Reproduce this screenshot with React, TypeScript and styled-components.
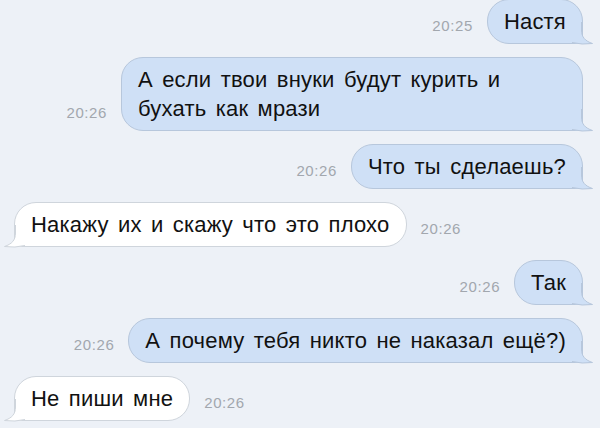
import React from "react";
import styled, { createGlobalStyle } from "styled-components";

const GlobalStyle = createGlobalStyle`
    html, body {
        margin: 0;
        padding: 0;
        background: #edf1f7;
    }
    body {
        width: 600px;
        height: 428px;
        overflow: hidden;
        font-family: "Liberation Sans", Arial, sans-serif;
    }
`;

const Chat = styled.div`
    display: flex;
    flex-direction: column;
    gap: 13px;
    padding: 0 17px 0 14px;
    margin-top: -1px;
`;

const Row = styled.div<{ $out: boolean }>`
    display: flex;
    justify-content: ${(p) => (p.$out ? "flex-end" : "flex-start")};
    align-items: flex-end;
    gap: 14px;
`;

const Time = styled.span`
    font-size: 15px;
    letter-spacing: 0.6px;
    line-height: 29px;
    color: #a2a7ae;
    margin-bottom: 4px;
`;

const Bubble = styled.div<{ $out: boolean }>`
    position: relative;
    box-sizing: border-box;
    max-width: 462px;
    padding: 7px 16px;
    font-size: 22px;
    letter-spacing: 0.2px;
    word-spacing: 3px;
    line-height: 29px;
    color: #111111;
    background: ${(p) => (p.$out ? "#cfe0f6" : "#ffffff")};
    border: 1px solid ${(p) => (p.$out ? "#b7c7dc" : "#cfd5dc")};
    border-radius: 22px;
    ${(p) => (p.$out ? "border-bottom-right-radius: 0;" : "border-bottom-left-radius: 0;")}
`;

const TailSvg = styled.svg<{ $out: boolean }>`
    position: absolute;
    bottom: -3px;
    width: 26px;
    height: 24px;
    overflow: visible;
    ${(p) => (p.$out ? "right: -12px;" : "left: -12px; transform: scaleX(-1);")}
`;

function Tail({ out }: { out: boolean }) {
    const fill = out ? "#cfe0f6" : "#ffffff";
    const stroke = out ? "#b7c7dc" : "#cfd5dc";
    return (
        <TailSvg $out={out} viewBox="0 0 26 24">
            <path d="M0 0 L13.5 0 L13.5 8 C13.5 15 17 19 24.5 21.5 Q14 23 4 20.5 L0 20.5 Z" fill={fill} />
            <path d="M13.5 0 L13.5 8 C13.5 15 17 19 24.5 21.5 Q14 23 4 20.5" fill="none" stroke={stroke} strokeWidth="1" />
        </TailSvg>
    );
}

type Message = { text: string; time: string; out: boolean };

const messages: Message[] = [
    { text: "Настя", time: "20:25", out: true },
    { text: "А если твои внуки будут курить и бухать как мрази", time: "20:26", out: true },
    { text: "Что ты сделаешь?", time: "20:26", out: true },
    { text: "Накажу их и скажу что это плохо", time: "20:26", out: false },
    { text: "Так", time: "20:26", out: true },
    { text: "А почему тебя никто не наказал ещё?)", time: "20:26", out: true },
    { text: "Не пиши мне", time: "20:26", out: false },
];

export default function App() {
    return (
        <>
            <GlobalStyle />
            <Chat>
                {messages.map((m, i) => (
                    <Row key={i} $out={m.out}>
                        {m.out && <Time>{m.time}</Time>}
                        <Bubble $out={m.out}>
                            {m.text}
                            <Tail out={m.out} />
                        </Bubble>
                        {!m.out && <Time>{m.time}</Time>}
                    </Row>
                ))}
            </Chat>
        </>
    );
}
